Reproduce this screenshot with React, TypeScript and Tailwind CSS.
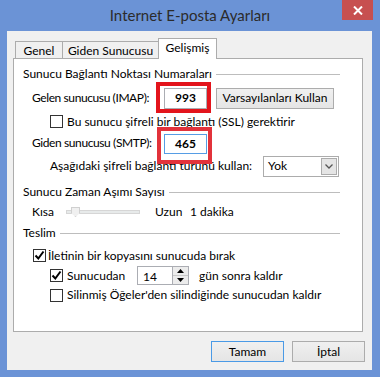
import type { ReactNode } from "react";

function Check({ checked = false }: { checked?: boolean }) {
	return (
		<span className="w-[13px] h-[13px] border border-[#333333] bg-white flex items-center justify-center shrink-0">
			{checked && (
				<svg width="11" height="11" viewBox="0 0 11 11">
					<path d="M1.5 5.5 L4.3 8.5 L9.5 1.5" fill="none" stroke="#000" strokeWidth="2" />
				</svg>
			)}
		</span>
	);
}

function GroupHeader({ children }: { children: ReactNode }) {
	return (
		<div className="h-[18px] flex items-center">
			<span>{children}</span>
			<div className="flex-1 h-px bg-[#bdbdbd] ml-[4px]" />
		</div>
	);
}

function Button({ label, primary = false, w }: { label: string; primary?: boolean; w: string }) {
	return (
		<div
			className={`${w} h-[21px] shrink-0 flex items-center justify-center bg-gradient-to-b from-[#f0f0f0] to-[#e5e5e5] border ${
				primary ? "border-[#4a9ae6]" : "border-[#acacac]"
			}`}>
			{label}
		</div>
	);
}

export default function App() {
	return (
		<div className="w-[380px] h-[377px] bg-[#6b93d6] flex flex-col whitespace-nowrap text-[12px] text-black font-['Lato','Noto_Sans',sans-serif]">
			{/* Title bar */}
			<div className="h-[31px] relative flex items-center justify-center text-[15px] text-[#2b2b2b] pb-[1px]">
				Internet E-posta Ayarları
				<div className="absolute left-[342px] top-0 w-[31px] h-[20px] bg-[#c75050] flex items-center justify-center">
					<svg width="10" height="9" viewBox="0 0 10 9">
						<path d="M1 0.5 L9 8.5 M9 0.5 L1 8.5" stroke="#fff" strokeWidth="2" />
					</svg>
				</div>
			</div>

			{/* Client area */}
			<div className="ml-[7px] mr-[8px] h-[339px] bg-[#f0f0f0] pl-[6px] pr-[7px] pt-[7px]">
				{/* Tabs */}
				<div className="flex items-end h-[20px] pl-[2px] relative z-10">
					<div className="w-[48px] h-[17px] border border-b-0 border-[#acacac] bg-[#f0f0f0] flex items-center justify-center pt-[1px]">
						Genel
					</div>
					<div className="w-[97px] h-[17px] -ml-px border border-b-0 border-[#acacac] bg-[#f0f0f0] flex items-center justify-center pt-[1px]">
						Giden Sunucusu
					</div>
					<div className="w-[59px] h-[21px] -ml-px -mb-px border border-b-0 border-[#acacac] bg-white flex items-center justify-center pb-[2px]">
						Gelişmiş
					</div>
				</div>

				{/* Tab panel */}
				<div className="w-[350px] h-[274px] border border-[#acacac] bg-white pl-[9px] pr-[22px] pt-[6px]">
					<GroupHeader>Sunucu Bağlantı Noktası Numaraları</GroupHeader>

					<div className="h-[22px] mt-[4px] flex items-center ml-[9px]">
						<span className="w-[132px] shrink-0 tracking-[-0.4px]">Gelen sunucusu (IMAP):</span>
						<div className="relative shrink-0">
							<div className="w-[43px] h-[21px] border border-[#abadb3] bg-white flex items-center justify-center font-bold">
								993
							</div>
							<div className="absolute -left-[8px] -right-[4px] -top-[6px] -bottom-[4px] border-[4px] border-[#e3141c]" />
						</div>
						<div className="ml-[9px]">
							<Button label="Varsayılanları Kullan" w="w-[118px]" />
						</div>
					</div>

					<div className="h-[21px] mt-[2px] flex items-center gap-[4px] ml-[27px]">
						<Check />
						<span>Bu sunucu şifreli bir bağlantı (SSL) gerektirir</span>
					</div>

					<div className="h-[21px] flex items-center ml-[9px]">
						<span className="w-[132px] shrink-0 tracking-[-0.4px]">Giden sunucusu (SMTP):</span>
						<div className="relative shrink-0 mt-[2px]">
							<div className="w-[43px] h-[20px] border border-[#569de5] bg-white flex items-center justify-center font-bold">
								465
							</div>
							<div className="absolute -left-[7px] -right-[5px] -top-[7px] -bottom-[10px] border-[4px] border-[#e2323b]" />
						</div>
					</div>

					<div className="h-[22px] mt-[2px] flex items-center ml-[27px]">
						<span className="w-[213px] shrink-0">Aşağıdaki şifreli bağlantı türünü kullan:</span>
						<div className="w-[76px] h-[21px] shrink-0 border border-[#acacac] bg-white flex items-center justify-between pl-[4px] pr-px">
							<span>Yok</span>
							<span className="w-[16px] h-[17px] bg-[#e5e5e5] border border-[#acacac] flex items-center justify-center">
								<svg width="8" height="5" viewBox="0 0 8 5">
									<path d="M0.5 0.5 L4 4 L7.5 0.5" fill="none" stroke="#555" strokeWidth="1.3" />
								</svg>
							</span>
						</div>
					</div>

					<div className="mt-[6px]">
						<GroupHeader>Sunucu Zaman Aşımı Sayısı</GroupHeader>
					</div>

					<div className="h-[22px] flex items-center ml-[9px]">
						<span className="w-[34px] shrink-0">Kısa</span>
						<div className="w-[74px] h-[4px] shrink-0 bg-[#e7eaea] border border-[#d6d6d6] relative">
							<div className="absolute left-[4px] -top-[4px] w-[9px] h-[10px] bg-[#f0f0f0] border border-[#d0d0d0] [clip-path:polygon(0_0,100%_0,100%_60%,50%_100%,0_60%)]" />
						</div>
						<span className="ml-[15px] w-[35px] shrink-0">Uzun</span>
						<span>1 dakika</span>
					</div>

					<div className="mt-[1px]">
						<GroupHeader>Teslim</GroupHeader>
					</div>

					<div className="h-[19px] mt-[4px] flex items-center gap-[2px] ml-[10px]">
						<Check checked />
						<span>İletinin bir kopyasını sunucuda bırak</span>
					</div>

					<div className="h-[19px] mt-[1px] flex items-center ml-[27px]">
						<Check checked />
						<span className="ml-[4px] w-[70px] shrink-0">Sunucudan</span>
						<div className="w-[52px] h-[19px] shrink-0 border border-[#abadb3] bg-white flex items-center justify-between pl-[5px]">
							<span className="pt-[2px]">14</span>
							<div className="w-[16px] h-full flex flex-col border-l border-[#abadb3]">
								<div className="flex-1 bg-[#ececec] border-b border-[#c8c8c8] flex items-center justify-center">
									<svg width="7" height="4" viewBox="0 0 7 4">
										<path d="M0 4 L3.5 0 L7 4 Z" fill="#000" />
									</svg>
								</div>
								<div className="flex-1 bg-[#ececec] flex items-center justify-center">
									<svg width="7" height="4" viewBox="0 0 7 4">
										<path d="M0 0 L3.5 4 L7 0 Z" fill="#000" />
									</svg>
								</div>
							</div>
						</div>
						<span className="ml-[10px]">gün sonra kaldır</span>
					</div>

					<div className="h-[20px] flex items-center gap-[4px] ml-[27px]">
						<Check />
						<span>Silinmiş Öğeler'den silindiğinde sunucudan kaldır</span>
					</div>
				</div>

				{/* Dialog buttons */}
				<div className="flex justify-end gap-[8px] mt-[9px]">
					<Button label="Tamam" primary w="w-[73px]" />
					<Button label="İptal" w="w-[73px]" />
				</div>
			</div>
		</div>
	);
}
